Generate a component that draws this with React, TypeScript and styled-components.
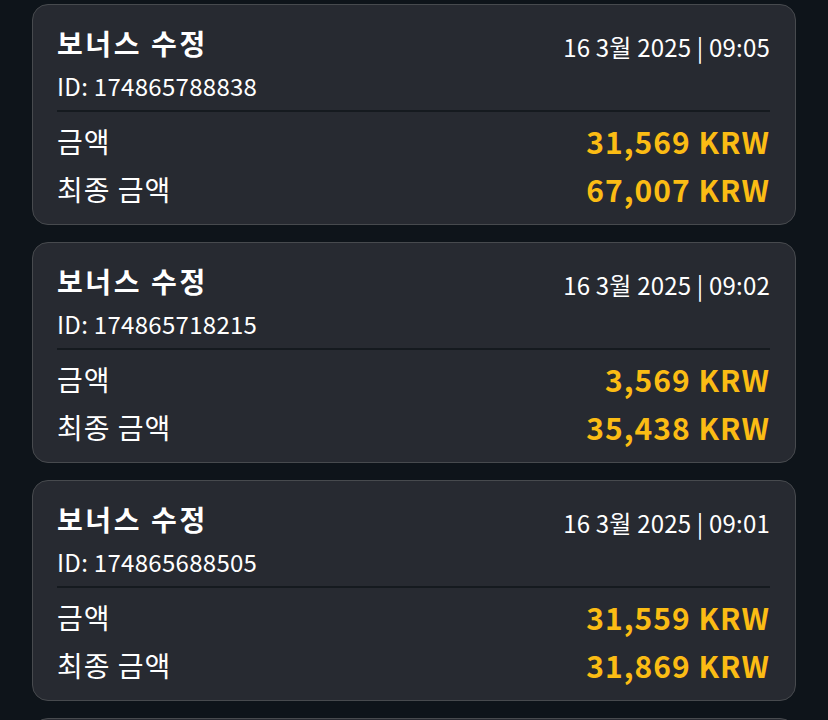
import { createGlobalStyle, styled } from "styled-components";

const GlobalStyle = createGlobalStyle`
  html, body {
    margin: 0;
    padding: 0;
    background-color: #0e141a;
  }
  body {
    font-family: "Noto Sans CJK KR", "Noto Sans", sans-serif;
    color: #ffffff;
  }
`;

const List = styled.div`
  display: flex;
  flex-direction: column;
  gap: 17px;
  padding: 4px 32px 0 32px;
`;

const Card = styled.div`
  background-color: #272a31;
  border: 1px solid #474a4e;
  border-radius: 16px;
  padding: 18px 25px 18px 24px;
  height: 221px;
  box-sizing: border-box;
`;

const Header = styled.div`
  display: flex;
  justify-content: space-between;
  align-items: flex-start;
`;

const Title = styled.h3`
  margin: 0;
  font-size: 28px;
  font-weight: 700;
  line-height: 40px;
  letter-spacing: 2.6px;
`;

const DateText = styled.span`
  font-size: 24px;
  line-height: 40px;
  margin-top: 4px;
  letter-spacing: 0.2px;
`;

const IdText = styled.div`
  font-size: 24px;
  line-height: 34px;
  margin-top: 2px;
  padding-bottom: 7px;
  letter-spacing: 0.3px;
  border-bottom: 2px solid #151a1f;
`;

const Rows = styled.div`
  padding-top: 5px;
`;

const Row = styled.div`
  display: flex;
  justify-content: space-between;
  align-items: center;
  height: 48px;
`;

const Label = styled.span`
  font-size: 28px;
  letter-spacing: 1px;
`;

const Amount = styled.span`
  font-size: 30px;
  font-weight: 700;
  letter-spacing: 1px;
  color: #fbbc14;
`;

type Item = {
  id: string;
  time: string;
  amount: string;
  total: string;
};

const items: Item[] = [
  { id: "174865788838", time: "09:05", amount: "31,569", total: "67,007" },
  { id: "174865718215", time: "09:02", amount: "3,569", total: "35,438" },
  { id: "174865688505", time: "09:01", amount: "31,559", total: "31,869" },
  { id: "174865612040", time: "08:58", amount: "12,000", total: "28,300" },
];

function App() {
  return (
    <>
      <GlobalStyle />
      <List>
        {items.map((item) => (
          <Card key={item.id}>
            <Header>
              <Title>보너스 수정</Title>
              <DateText>16 3월 2025 | {item.time}</DateText>
            </Header>
            <IdText>ID: {item.id}</IdText>
            <Rows>
              <Row>
                <Label>금액</Label>
                <Amount>{item.amount} KRW</Amount>
              </Row>
              <Row>
                <Label>최종 금액</Label>
                <Amount>{item.total} KRW</Amount>
              </Row>
            </Rows>
          </Card>
        ))}
      </List>
    </>
  );
}

export default App;
